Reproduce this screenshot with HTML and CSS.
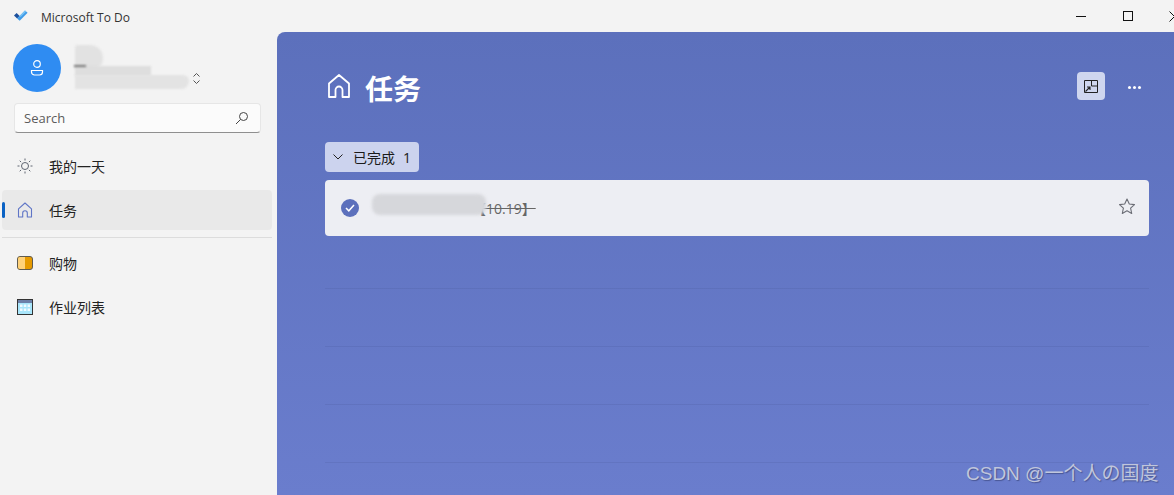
FILE: index.html
```html
<!DOCTYPE html>
<html lang="zh">
<head>
<meta charset="utf-8">
<title>Microsoft To Do</title>
<link rel="stylesheet" href="styles.css">
</head>
<body>
<header class="titlebar">
  <div class="app">
    <svg class="app-logo" width="16" height="14" viewBox="0 0 16 14"><path d="M1 7.500 3.600 5l3 3-2.500 2.600z" fill="#1b4f9c"/><path d="M4.100 10.600 12 2.500l2.600 2.300-7.900 8z" fill="#3f9be8"/><path d="M6.600 8 12 2.500l1.200 1L7.700 9.100z" fill="#79c4f5"/></svg>
    <span class="app-name">Microsoft To Do</span>
  </div>
  <div class="win-controls">
    <svg class="win-btn" width="46" height="16" viewBox="0 0 46 16"><path d="M18 8.500h10" stroke="#111" fill="none"/></svg>
    <svg class="win-btn" width="46" height="16" viewBox="0 0 46 16"><rect x="18.500" y="3.500" width="9" height="9" stroke="#111" fill="none"/></svg>
    <svg class="win-close" width="8" height="16" viewBox="0 0 8 16"><path d="M.5 3.500 5.500 8.500.5 13.500" stroke="#111" fill="none"/></svg>
  </div>
</header>
<div class="main">
  <aside class="sidebar">
    <div class="account">
      <div class="avatar">
        <svg width="16" height="18" viewBox="0 0 16 18" fill="none" stroke="#fff" stroke-width="1.200"><circle cx="8" cy="5" r="3.300"/><path d="M2.500 11.500h11v1.500a3 3 0 0 1-3 3h-5a3 3 0 0 1-3-3z"/></svg>
      </div>
      <div class="acct-name">
        <span class="blur blur-a"></span>
        <span class="blur blur-b"></span>
        <span class="blur blur-c"></span>
        <span class="name-mark"></span>
      </div>
      <svg class="acct-chev" width="9" height="13" viewBox="0 0 9 13" fill="none" stroke="#555"><path d="M1.500 4.500 4.500 1.500l3 3M1.500 8.500l3 3 3-3"/></svg>
    </div>
    <div class="search">
      <span class="search-text">Search</span>
      <svg width="14" height="14" viewBox="0 0 14 14" fill="none" stroke="#444"><circle cx="8.500" cy="5.500" r="4"/><path d="M5.500 8.500 1 13"/></svg>
    </div>
    <nav class="nav">
      <a class="nav-item">
        <svg class="nav-icon" width="16" height="16" viewBox="0 0 16 16" fill="none" stroke="#5e6470"><circle cx="8" cy="8" r="3.500"/><path d="M8 .5v2M8 13.500v2M.5 8h2M13.500 8h2M2.700 2.700l1.400 1.400M11.900 11.900l1.400 1.400M2.700 13.300l1.400-1.400M11.900 4.100l1.400-1.400"/></svg>
        <span>我的一天</span>
      </a>
      <a class="nav-item active">
        <span class="marker"></span>
        <svg class="nav-icon" width="16" height="16" viewBox="0 0 16 16" fill="none" stroke="#5f75c6" stroke-width="1.100"><path d="M1.500 6.800 8 1l6.500 5.800V15h-4.200v-4a2.300 2.300 0 0 0-4.600 0v4H1.500z" stroke-linejoin="round"/></svg>
        <span>任务</span>
      </a>
      <div class="nav-sep"></div>
      <a class="nav-item">
        <span class="icon-book"><span class="book-left"></span></span>
        <span>购物</span>
      </a>
      <a class="nav-item">
        <svg class="nav-icon" width="16" height="16" viewBox="0 0 16 16"><rect x=".5" y=".5" width="15" height="15" fill="#a9e6fb" stroke="#333"/><rect x="1" y="1" width="14" height="3" fill="#6d80a8"/><path d="M3 5.500h2.500V8H3zM6.800 5.500h2.500V8H6.800zM10.600 5.500H13V8h-2.400zM3 9.500h2.500V12H3zM6.800 9.500h2.500V12H6.800zM10.600 9.500H13V12h-2.400z" fill="#f2fbff"/></svg>
        <span>作业列表</span>
      </a>
    </nav>
  </aside>
  <main class="content">
    <div class="head">
      <div class="head-title">
        <svg width="24" height="26" viewBox="0 0 24 26" fill="none" stroke="#fff" stroke-width="1.800"><path d="M2 10.500 12 2l10 8.500V24h-6.500v-7a3.500 3.500 0 0 0-7 0v7H2z" stroke-linejoin="round"/></svg>
        <h1>任务</h1>
      </div>
      <div class="head-actions">
        <span class="suggest">
          <svg width="14" height="13" viewBox="0 0 14 13" fill="none" stroke="#222"><path d="M.5.500h13v12H.5zM7.500.500v5.500h6"/><path d="M1.500 11.500 6 7M3 7h3v3" stroke-width="1.100"/></svg>
        </span>
        <span class="dots"><i></i><i></i><i></i></span>
      </div>
    </div>
    <button class="group">
      <svg width="10" height="6" viewBox="0 0 10 6" fill="none" stroke="#222"><path d="M.5.500 5 5 9.500.500"/></svg>
      <span>已完成</span><span class="group-count">1</span>
    </button>
    <div class="task">
      <span class="check"><svg width="10" height="8" viewBox="0 0 10 8" fill="none" stroke="#fff" stroke-width="1.500"><path d="M1 4l2.800 2.800L9 1"/></svg></span>
      <span class="task-title"><span class="task-blur"></span><s>【10.19】</s></span>
      <svg class="star" width="18" height="17" viewBox="0 0 18 17" fill="none" stroke="#6b6d75" stroke-width="1.100"><path d="M9 1l2.300 5 5.200.600-3.900 3.600 1.100 5.300L9 12.800l-4.700 2.700 1.100-5.300L1.500 6.600 6.700 6z" stroke-linejoin="round"/></svg>
    </div>
    <div class="rows">
      <div class="row"></div>
      <div class="row"></div>
      <div class="row"></div>
      <div class="row"></div>
    </div>
  </main>
</div>
<div class="watermark">CSDN @一个人の国度</div>
</body>
</html>
```

FILE: styles.css
```css
* { box-sizing: border-box; }
html, body { height: 100%; }
body {
  margin: 0;
  width: 1174px;
  height: 495px;
  overflow: hidden;
  position: relative;
  display: flex;
  flex-direction: column;
  background: #f3f3f3;
  color: #1c1c1c;
  font-family: "Open Sans", "Noto Sans CJK SC", sans-serif;
}
.titlebar {
  height: 32px;
  flex: none;
  display: flex;
  align-items: center;
  justify-content: space-between;
}
.app { display: flex; align-items: center; padding-left: 13px; }
.app-logo { margin-right: 12px; margin-top: -2px; }
.app-name { font-size: 12px; color: #333; margin-top: 3px; }
.win-controls { display: flex; align-items: center; margin-top: -1px; }
.win-btn { display: block; }
.win-btn:first-child { margin-right: 1px; }
.win-close { display: block; margin-left: 18px; margin-right: -3px; }
.main { flex: 1; display: flex; min-height: 0; }
.sidebar { width: 277px; flex: none; }
.account {
  display: flex;
  align-items: center;
  height: 48px;
  margin-top: 12px;
  padding-left: 13px;
}
.avatar {
  width: 48px;
  height: 48px;
  border-radius: 50%;
  background: #2f8cf2;
  display: flex;
  align-items: center;
  justify-content: center;
}
.acct-name { width: 118px; height: 48px; margin-left: 14px; position: relative; flex: none; }
.blur { position: absolute; filter: blur(1px); }
.blur-a { left: 0; top: 1px; width: 28px; height: 24px; border-radius: 3px 13px 10px 0; background: #e2e2e2; }
.blur-b { left: 0; top: 22px; width: 76px; height: 10px; background: #dedede; }
.blur-c { left: 0; top: 31px; width: 114px; height: 14px; background: #e3e3e3; border-radius: 0 6px 8px 0; }
.name-mark { position: absolute; left: -1px; top: 21px; width: 12px; height: 2px; background: #777; filter: blur(.8px); }
.acct-chev { margin-left: -1px; margin-top: 21px; flex: none; }
.search {
  margin: 11px 16px 0 14px;
  height: 30px;
  background: #fbfbfb;
  border: 1px solid #e6e6e6;
  border-bottom: 1px solid #8f8f8f;
  border-radius: 4px;
  display: flex;
  align-items: center;
  justify-content: space-between;
  padding: 0 11px 0 9px;
}
.search-text { font-size: 13px; color: #5c5c5c; }
.nav { margin-top: 11px; }
.nav-item {
  position: relative;
  height: 44px;
  display: flex;
  align-items: center;
  margin: 0 5px 0 2px;
  padding-left: 15px;
  font-size: 14px;
  color: #222;
  border-radius: 4px;
}
.nav-item > span:last-child { margin-left: 16px; }
.nav-icon { flex: none; display: block; }
.nav-item.active { height: 40px; margin-top: 2px; background: #e9e9e9; }
.marker {
  position: absolute;
  left: 0;
  top: 12px;
  width: 3px;
  height: 16px;
  border-radius: 2px;
  background: #0a62c4;
}
.nav-sep { height: 1px; background: #dcdcdc; margin: 7px 5px 3px 2px; }
.icon-book {
  width: 16px;
  height: 14px;
  flex: none;
  border: 1px solid #5f5b50;
  border-radius: 3px;
  background: #e69a00;
  display: block;
}
.book-left { display: block; width: 7px; height: 100%; background: #ffd27a; border-radius: 2px 0 0 2px; }
.content {
  flex: 1;
  position: relative;
  border-top-left-radius: 8px;
  background: linear-gradient(#5c70bc, #6a7dcd);
  padding: 0 25px 0 48px;
  overflow: hidden;
}
.head {
  height: 40px;
  margin-top: 36px;
  display: flex;
  align-items: center;
  justify-content: space-between;
}
.head-title { display: flex; align-items: center; margin-left: 2px; }
.head-title svg { display: block; margin-top: -4px; }
.head-title h1 {
  margin: 0 0 0 14px;
  font-size: 28px;
  line-height: 40px;
  font-weight: 700;
  color: #fff;
  font-family: "Noto Sans CJK SC", sans-serif;
}
.head-actions { display: flex; align-items: center; }
.suggest {
  width: 28px;
  height: 28px;
  border-radius: 4px;
  background: #cfd6ef;
  display: flex;
  align-items: center;
  justify-content: center;
  margin-top: -4px;
}
.dots { display: flex; gap: 2px; margin: -2px 8px 0 23px; }
.dots i { width: 3px; height: 3px; border-radius: 50%; background: #fff; }
.group {
  margin: 34px 0 0;
  height: 30px;
  width: 94px;
  border: 0;
  border-radius: 4px;
  background: #ccd3ee;
  display: flex;
  align-items: center;
  padding: 0 0 0 8px;
  gap: 10px;
  font: 14px "Open Sans", "Noto Sans CJK SC", sans-serif;
  color: #1a1a1a;
}
.group-count { margin-left: -2px; }
.task {
  margin-top: 8px;
  height: 56px;
  background: #edeef3;
  border-radius: 4px;
  display: flex;
  align-items: center;
  padding: 0 13px 0 16px;
}
.check {
  width: 18px;
  height: 18px;
  border-radius: 50%;
  background: #5c70bc;
  display: flex;
  align-items: center;
  justify-content: center;
  flex: none;
}
.task-title { flex: 1; display: flex; align-items: center; margin-left: 13px; font-size: 14px; color: #666; position: relative; }
.task-title s { margin-left: 100px; }
.task-blur {
  position: absolute;
  left: 0;
  top: -4px;
  width: 114px;
  height: 21px;
  border-radius: 8px;
  background: #d6d7db;
  filter: blur(1.500px);
}
.star { flex: none; display: block; margin-top: -4px; }
.rows { margin-top: -5px; }
.row { height: 58px; border-bottom: 1px solid rgba(70, 85, 150, .2); }
.watermark {
  position: absolute;
  left: 966px;
  top: 460px;
  font-family: "Liberation Sans", "Noto Sans CJK SC", sans-serif;
  font-size: 19px;
  line-height: 28px;
  color: #c0c6dc;
  text-shadow: 1px 1px 1px rgba(50, 60, 110, .6);
  white-space: nowrap;
}
```
